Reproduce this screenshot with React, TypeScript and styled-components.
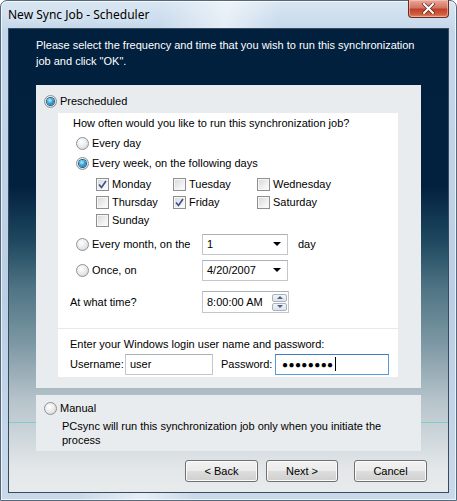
import React from 'react';
import styled, { createGlobalStyle } from 'styled-components';

const GlobalStyle = createGlobalStyle`
  html, body {
    margin: 0;
    padding: 0;
    background: #ffffff;
  }
  body {
    font-family: 'Liberation Sans', Arial, sans-serif;
    font-size: 11px;
    color: #000;
  }
`;

const Window = styled.div`
  width: 457px;
  height: 501px;
  box-sizing: border-box;
  display: flex;
  flex-direction: column;
  border: 1px solid #56697c;
  border-radius: 7px 7px 0 0;
  padding: 0 7px 7px;
  background:
    linear-gradient(100deg, rgba(255, 255, 255, 0) 30%, rgba(255, 255, 255, 0.55) 42%, rgba(255, 255, 255, 0) 52%),
    linear-gradient(180deg, #d9e6f2 0%, #c4d7ea 6%, #b9cfe5 60%, #c9d9ea 100%);
  box-shadow: inset 0 0 0 1px rgba(255, 255, 255, 0.7);
`;

const TitleBar = styled.div`
  height: 27px;
  display: flex;
  align-items: flex-start;
`;

const Title = styled.div`
  font-family: 'Noto Sans', 'Open Sans', sans-serif;
  font-size: 12px;
  line-height: 27px;
  color: #000;
  text-shadow: 0 0 8px rgba(255, 255, 255, 0.9);
`;

const CloseButton = styled.div`
  margin-left: auto;
  margin-top: -1px;
  width: 41px;
  height: 18px;
  box-sizing: border-box;
  border: 1px solid #6b2c24;
  border-top: none;
  border-radius: 0 0 4px 4px;
  background: linear-gradient(180deg, #e9a99b 0%, #d47563 45%, #c1402a 55%, #d0603f 85%, #e08e6d 100%);
  box-shadow: inset 0 0 0 1px rgba(255, 210, 200, 0.5);
  display: flex;
  align-items: center;
  justify-content: center;
`;

const Client = styled.div`
  flex: 1;
  display: flex;
  flex-direction: column;
  border: 1px solid #3a4a5c;
  background:
    linear-gradient(180deg, transparent 393px, rgba(110, 205, 200, 0.8) 393px, rgba(110, 205, 200, 0.8) 394px, transparent 394px),
    linear-gradient(180deg, #01203e 0%, #02213f 34%, #1f4960 46%, #4f7484 56%, #7d98a4 68%, #b5c3ca 80%, #e3e7e9 95%, #e8ebec 100%);
`;

const Intro = styled.div`
  padding: 8px 30px 0 27px;
  line-height: 16px;
  color: #ffffff;
  height: 32px;
`;

const Panel = styled.div<{ $height: number }>`
  margin-left: 27px;
  width: 385px;
  height: ${(p) => p.$height}px;
  box-sizing: border-box;
  background: #e9ecee;
`;

const SchedulePanel = styled(Panel)`
  margin-top: 16px;
  padding: 8px 23px 11px 8px;
  display: flex;
  flex-direction: column;
  gap: 4px;
`;

const ManualPanel = styled(Panel)`
  margin-top: 7px;
  padding: 5px 8px 0;
`;

const WhiteBox = styled.div`
  margin-left: 14px;
  flex: 1;
  background: #ffffff;
  display: flex;
  flex-direction: column;
`;

const Row = styled.div<{ $h: number; $indent: number }>`
  height: ${(p) => p.$h}px;
  padding-left: ${(p) => p.$indent}px;
  display: flex;
  align-items: center;
`;

const Label = styled.span<{ $w?: number }>`
  display: inline-block;
  width: ${(p) => (p.$w ? `${p.$w}px` : 'auto')};
  white-space: nowrap;
`;

const Choice = styled.label<{ $w?: number }>`
  display: flex;
  align-items: center;
  gap: 3px;
  width: ${(p) => (p.$w ? `${p.$w}px` : 'auto')};
  white-space: nowrap;
`;

const RadioCircle = styled.span<{ $on?: boolean }>`
  width: 13px;
  height: 13px;
  box-sizing: border-box;
  border-radius: 50%;
  border: 1px solid #8f9295;
  background: radial-gradient(circle at 40% 35%, #ffffff 0%, #e7e8ea 55%, #c9ccd0 100%);
  display: flex;
  align-items: center;
  justify-content: center;
  flex-shrink: 0;

  &::after {
    content: '';
    display: ${(p) => (p.$on ? 'block' : 'none')};
    width: 7px;
    height: 7px;
    border-radius: 50%;
    background: radial-gradient(circle at 40% 35%, #b7ecff 0%, #3fa4d8 45%, #0d5a8c 100%);
    box-shadow: 0 0 0 1px #1d5f86;
  }
`;

const CheckBox = styled.span`
  width: 13px;
  height: 13px;
  box-sizing: border-box;
  border: 1px solid #8f8f8f;
  background: linear-gradient(135deg, #d5d7d9 0%, #eef0f1 60%, #ffffff 100%);
  box-shadow: inset 0 0 0 1px #f6f6f6;
  display: flex;
  align-items: center;
  justify-content: center;
  flex-shrink: 0;
`;

const DayGrid = styled.div`
  padding-left: 38px;
  display: grid;
  grid-template-columns: 77px 84px 90px;
  grid-auto-rows: 18px;
  align-items: center;
  margin-top: 2px;
`;

const Field = styled.div<{ $w: number; $focus?: boolean }>`
  width: ${(p) => p.$w}px;
  height: 21px;
  box-sizing: border-box;
  border: 1px solid ${(p) => (p.$focus ? '#5b9ad8' : '#c2c7cc')};
  border-top-color: ${(p) => (p.$focus ? '#3d7bc0' : '#abb0b6')};
  background: #ffffff;
  display: flex;
  align-items: center;
  padding-left: 4px;
`;

const DropArrow = styled.span`
  margin-left: auto;
  margin-right: 6px;
  width: 0;
  height: 0;
  border-left: 4px solid transparent;
  border-right: 4px solid transparent;
  border-top: 4px solid #000;
`;

const Spinner = styled.div`
  margin-left: auto;
  margin-right: 1px;
  width: 15px;
  height: 17px;
  display: flex;
  flex-direction: column;
  gap: 1px;
`;

const SpinButton = styled.div<{ $up?: boolean }>`
  flex: 1;
  border: 1px solid #a9b2bd;
  border-radius: 2px;
  background: linear-gradient(180deg, #f3f5f8 0%, #dde3ea 100%);
  display: flex;
  align-items: center;
  justify-content: center;

  &::after {
    content: '';
    width: 0;
    height: 0;
    border-left: 3px solid transparent;
    border-right: 3px solid transparent;
    ${(p) => (p.$up ? 'border-bottom: 3px solid #4d6185;' : 'border-top: 3px solid #4d6185;')}
  }
`;

const Separator = styled.div`
  height: 1px;
  background: #e6e8ea;
  margin: 11px 0 7px;
`;

const Dots = styled.span`
  font-size: 10px;
  letter-spacing: 0.4px;
  color: #000;
  margin-left: 2px;
`;

const Caret = styled.span`
  width: 1px;
  height: 14px;
  background: #000;
  margin-left: 1px;
`;

const Description = styled.div`
  margin: 3px 0 0 18px;
  line-height: 14px;
`;

const ButtonRow = styled.div`
  margin-top: 9px;
  padding-right: 21px;
  display: flex;
  justify-content: flex-end;
  gap: 8px;
`;

const Button = styled.button<{ $w: number; $gapBefore?: number }>`
  width: ${(p) => p.$w}px;
  height: 22px;
  margin-left: ${(p) => p.$gapBefore ?? 0}px;
  font-family: inherit;
  font-size: 11px;
  color: #000;
  border: 1px solid #707070;
  border-radius: 3px;
  background: linear-gradient(180deg, #f2f2f2 0%, #ebebeb 48%, #dddddd 52%, #cfcfcf 100%);
  box-shadow: inset 0 0 0 1px #fbfbfb;
  padding: 0;
`;

const Radio = ({ on, children, w }: { on?: boolean; children: React.ReactNode; w?: number }) => (
  <Choice $w={w}>
    <RadioCircle $on={on} />
    <span>{children}</span>
  </Choice>
);

const Check = ({ on, children }: { on?: boolean; children: React.ReactNode }) => (
  <Choice>
    <CheckBox>
      {on && (
        <svg width="9" height="9" viewBox="0 0 9 9">
          <path d="M1 4.5 L3.5 7.5 L8 1" fill="none" stroke="#3b4f8c" strokeWidth="1.6" />
        </svg>
      )}
    </CheckBox>
    <span>{children}</span>
  </Choice>
);

const days: [string, boolean][] = [
  ['Monday', true],
  ['Tuesday', false],
  ['Wednesday', false],
  ['Thursday', false],
  ['Friday', true],
  ['Saturday', false],
  ['Sunday', false],
];

export default function App() {
  return (
    <>
      <GlobalStyle />
      <Window>
        <TitleBar>
          <Title>New Sync Job - Scheduler</Title>
          <CloseButton>
            <svg width="13" height="11" viewBox="0 0 13 11">
              <path d="M2 1 L11 10 M11 1 L2 10" stroke="#5a2a22" strokeWidth="3.4" strokeLinecap="round" />
              <path d="M2 1 L11 10 M11 1 L2 10" stroke="#ffffff" strokeWidth="2" strokeLinecap="round" />
            </svg>
          </CloseButton>
        </TitleBar>
        <Client>
          <Intro>
            Please select the frequency and time that you wish to run this synchronization job and click "OK".
          </Intro>
          <SchedulePanel $height={303}>
            <Row $h={16} $indent={0}>
              <Radio on>Prescheduled</Radio>
            </Row>
            <WhiteBox>
              <Row $h={16} $indent={15} style={{ marginTop: 2 }}>
                How often would you like to run this synchronization job?
              </Row>
              <Row $h={20} $indent={18} style={{ marginTop: 2 }}>
                <Radio>Every day</Radio>
              </Row>
              <Row $h={20} $indent={18}>
                <Radio on>Every week, on the following days</Radio>
              </Row>
              <DayGrid>
                {days.map(([d, on]) => (
                  <Check key={d} on={on}>
                    {d}
                  </Check>
                ))}
              </DayGrid>
              <Row $h={26} $indent={18} style={{ marginTop: 2 }}>
                <Radio w={126}>Every month, on the</Radio>
                <Field $w={86}>
                  1
                  <DropArrow />
                </Field>
                <Label style={{ marginLeft: 10 }}>day</Label>
              </Row>
              <Row $h={26} $indent={18}>
                <Radio w={126}>Once, on</Radio>
                <Field $w={86}>
                  4/20/2007
                  <DropArrow />
                </Field>
              </Row>
              <Row $h={30} $indent={12} style={{ marginTop: 4 }}>
                <Label $w={132}>At what time?</Label>
                <Field $w={87} style={{ height: 22 }}>
                  8:00:00 AM
                  <Spinner>
                    <SpinButton $up />
                    <SpinButton />
                  </Spinner>
                </Field>
              </Row>
              <Separator />
              <Row $h={16} $indent={12}>
                Enter your Windows login user name and password:
              </Row>
              <Row $h={24} $indent={12}>
                <Label $w={55}>Username:</Label>
                <Field $w={88}>user</Field>
                <Label $w={54} style={{ marginLeft: 8 }}>
                  Password:
                </Label>
                <Field $w={114} $focus>
                  <Dots>●●●●●●●●</Dots>
                  <Caret />
                </Field>
              </Row>
            </WhiteBox>
          </SchedulePanel>
          <ManualPanel $height={56}>
            <Row $h={16} $indent={0}>
              <Radio>Manual</Radio>
            </Row>
            <Description>PCsync will run this synchronization job only when you initiate the process</Description>
          </ManualPanel>
          <ButtonRow>
            <Button $w={73}>&lt; Back</Button>
            <Button $w={72}>Next &gt;</Button>
            <Button $w={73} $gapBefore={8}>
              Cancel
            </Button>
          </ButtonRow>
        </Client>
      </Window>
    </>
  );
}
